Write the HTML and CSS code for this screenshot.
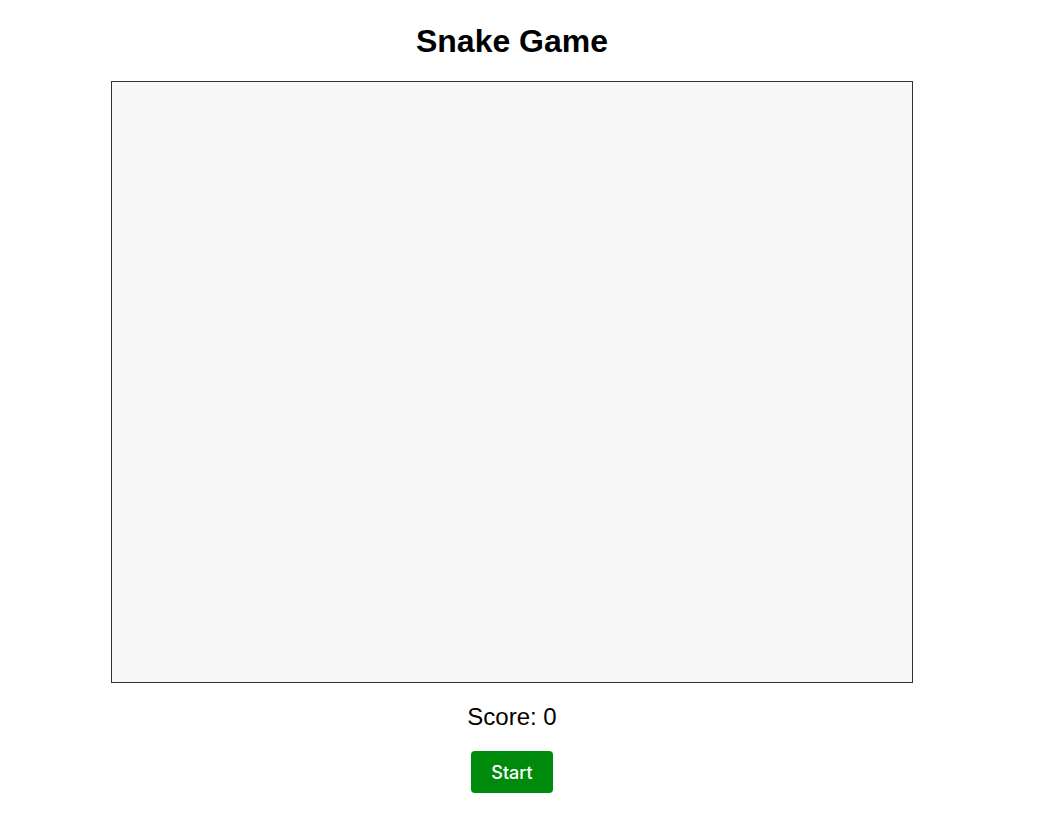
FILE: index.html
```html
<!DOCTYPE html>
<html lang="en">
<head>
    <meta charset="UTF-8">
    <meta name="viewport" content="width=device-width, initial-scale=1.0">
    <title>Snake Game</title>
    <link rel="stylesheet" href="styles.css">
</head>
<body>

<div class="page">
    <h1>Snake Game</h1>
    <div class="board" id="board"></div>
    <p class="score">Score: <span id="score">0</span></p>
    <button class="start-btn" id="startBtn">Start</button>
</div>

</body>
</html>
```

FILE: styles.css
```css
body {
    font-family: "Liberation Sans", Arial, sans-serif;
    margin: 0;
    padding: 0;
    background-color: #fff;
    color: #000;
}
.page {
    width: 1024px;
    display: flex;
    flex-direction: column;
    align-items: center;
}
h1 {
    font-size: 32px;
    line-height: 37px;
    margin: 23px 0 21px;
}
.board {
    width: 800px;
    height: 600px;
    background-color: #f7f7f7;
    border: 1px solid #333;
}
.score {
    font-size: 24px;
    line-height: 28px;
    margin: 20px 0;
}
.start-btn {
    font-family: Inter, Roboto, "Liberation Sans", sans-serif;
    font-size: 18px;
    font-weight: 500;
    line-height: 22px;
    height: 42px;
    padding: 11px 20px 9px;
    width: 82px;
    color: #fff;
    background-color: #008a0c;
    border: none;
    border-radius: 4px;
    cursor: pointer;
}
```
